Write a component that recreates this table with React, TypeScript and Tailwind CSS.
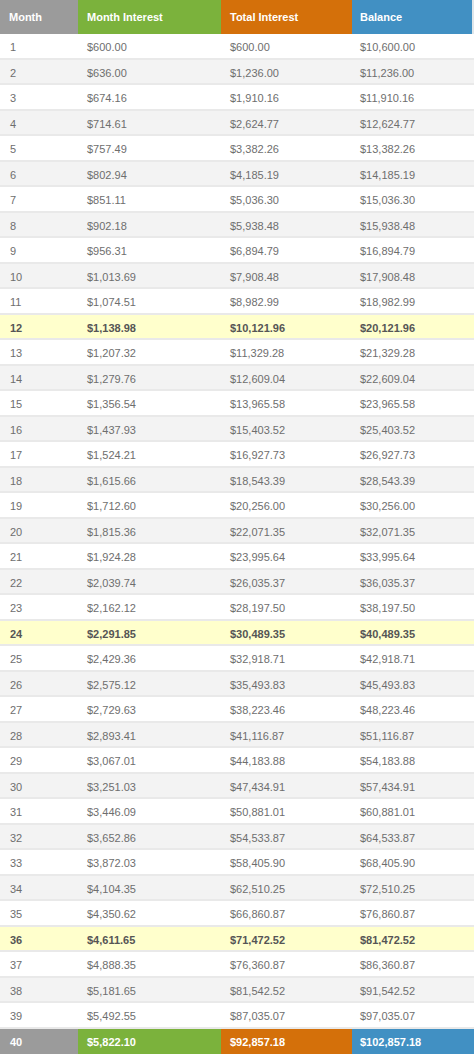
const rows: [number, string, string, string][] = [
  [1, "$600.00", "$600.00", "$10,600.00"],
  [2, "$636.00", "$1,236.00", "$11,236.00"],
  [3, "$674.16", "$1,910.16", "$11,910.16"],
  [4, "$714.61", "$2,624.77", "$12,624.77"],
  [5, "$757.49", "$3,382.26", "$13,382.26"],
  [6, "$802.94", "$4,185.19", "$14,185.19"],
  [7, "$851.11", "$5,036.30", "$15,036.30"],
  [8, "$902.18", "$5,938.48", "$15,938.48"],
  [9, "$956.31", "$6,894.79", "$16,894.79"],
  [10, "$1,013.69", "$7,908.48", "$17,908.48"],
  [11, "$1,074.51", "$8,982.99", "$18,982.99"],
  [12, "$1,138.98", "$10,121.96", "$20,121.96"],
  [13, "$1,207.32", "$11,329.28", "$21,329.28"],
  [14, "$1,279.76", "$12,609.04", "$22,609.04"],
  [15, "$1,356.54", "$13,965.58", "$23,965.58"],
  [16, "$1,437.93", "$15,403.52", "$25,403.52"],
  [17, "$1,524.21", "$16,927.73", "$26,927.73"],
  [18, "$1,615.66", "$18,543.39", "$28,543.39"],
  [19, "$1,712.60", "$20,256.00", "$30,256.00"],
  [20, "$1,815.36", "$22,071.35", "$32,071.35"],
  [21, "$1,924.28", "$23,995.64", "$33,995.64"],
  [22, "$2,039.74", "$26,035.37", "$36,035.37"],
  [23, "$2,162.12", "$28,197.50", "$38,197.50"],
  [24, "$2,291.85", "$30,489.35", "$40,489.35"],
  [25, "$2,429.36", "$32,918.71", "$42,918.71"],
  [26, "$2,575.12", "$35,493.83", "$45,493.83"],
  [27, "$2,729.63", "$38,223.46", "$48,223.46"],
  [28, "$2,893.41", "$41,116.87", "$51,116.87"],
  [29, "$3,067.01", "$44,183.88", "$54,183.88"],
  [30, "$3,251.03", "$47,434.91", "$57,434.91"],
  [31, "$3,446.09", "$50,881.01", "$60,881.01"],
  [32, "$3,652.86", "$54,533.87", "$64,533.87"],
  [33, "$3,872.03", "$58,405.90", "$68,405.90"],
  [34, "$4,104.35", "$62,510.25", "$72,510.25"],
  [35, "$4,350.62", "$66,860.87", "$76,860.87"],
  [36, "$4,611.65", "$71,472.52", "$81,472.52"],
  [37, "$4,888.35", "$76,360.87", "$86,360.87"],
  [38, "$5,181.65", "$81,542.52", "$91,542.52"],
  [39, "$5,492.55", "$87,035.07", "$97,035.07"],
];

const grid = "grid grid-cols-[78px_143px_131px_1fr]";

export default function App() {
  return (
    <div
      className="w-[474px] h-[1054px] overflow-hidden bg-white text-[11px]"
      style={{ fontFamily: '"Liberation Sans", Arial, sans-serif' }}
    >
      {/* header */}
      <div className={`${grid} h-[34px] font-bold text-white`}>
        <div className="bg-[#9b9b9b] flex items-center pl-[9px] pt-px">Month</div>
        <div className="bg-[#7bb23c] flex items-center pl-[9px] pt-px">Month Interest</div>
        <div className="bg-[#d4700a] flex items-center pl-[9px] pt-px">Total Interest</div>
        <div className="bg-[#4190c3] flex items-center pl-[8px] pt-px border-r-2 border-[#dfe6ea]">Balance</div>
      </div>

      {rows.map(([m, a, b, c]) => {
        const hl = m % 12 === 0;
        return (
          <div
            key={m}
            className={`${grid} h-[25.5px] border-b-2 border-[#e9e9e9] ${
              hl
                ? "bg-[#ffffcc] font-bold text-[#555]"
                : m % 2 === 0
                ? "bg-[#f3f3f3] text-[#6e6e6e]"
                : "bg-white text-[#6e6e6e]"
            }`}
          >
            <div className="flex items-center pl-[10px] pt-[3px]">{m}</div>
            <div className="flex items-center pl-[9px] pt-[3px]">{a}</div>
            <div className="flex items-center pl-[9px] pt-[3px]">{b}</div>
            <div className="flex items-center pl-[8px] pt-[3px]">{c}</div>
          </div>
        );
      })}

      {/* final row */}
      <div className={`${grid} h-[26px] font-bold text-white`}>
        <div className="bg-[#9b9b9b] flex items-center pl-[10px] pt-px">40</div>
        <div className="bg-[#7bb23c] flex items-center pl-[9px] pt-px">$5,822.10</div>
        <div className="bg-[#d4700a] flex items-center pl-[9px] pt-px">$92,857.18</div>
        <div className="bg-[#4190c3] flex items-center pl-[8px] pt-px">$102,857.18</div>
      </div>
    </div>
  );
}
